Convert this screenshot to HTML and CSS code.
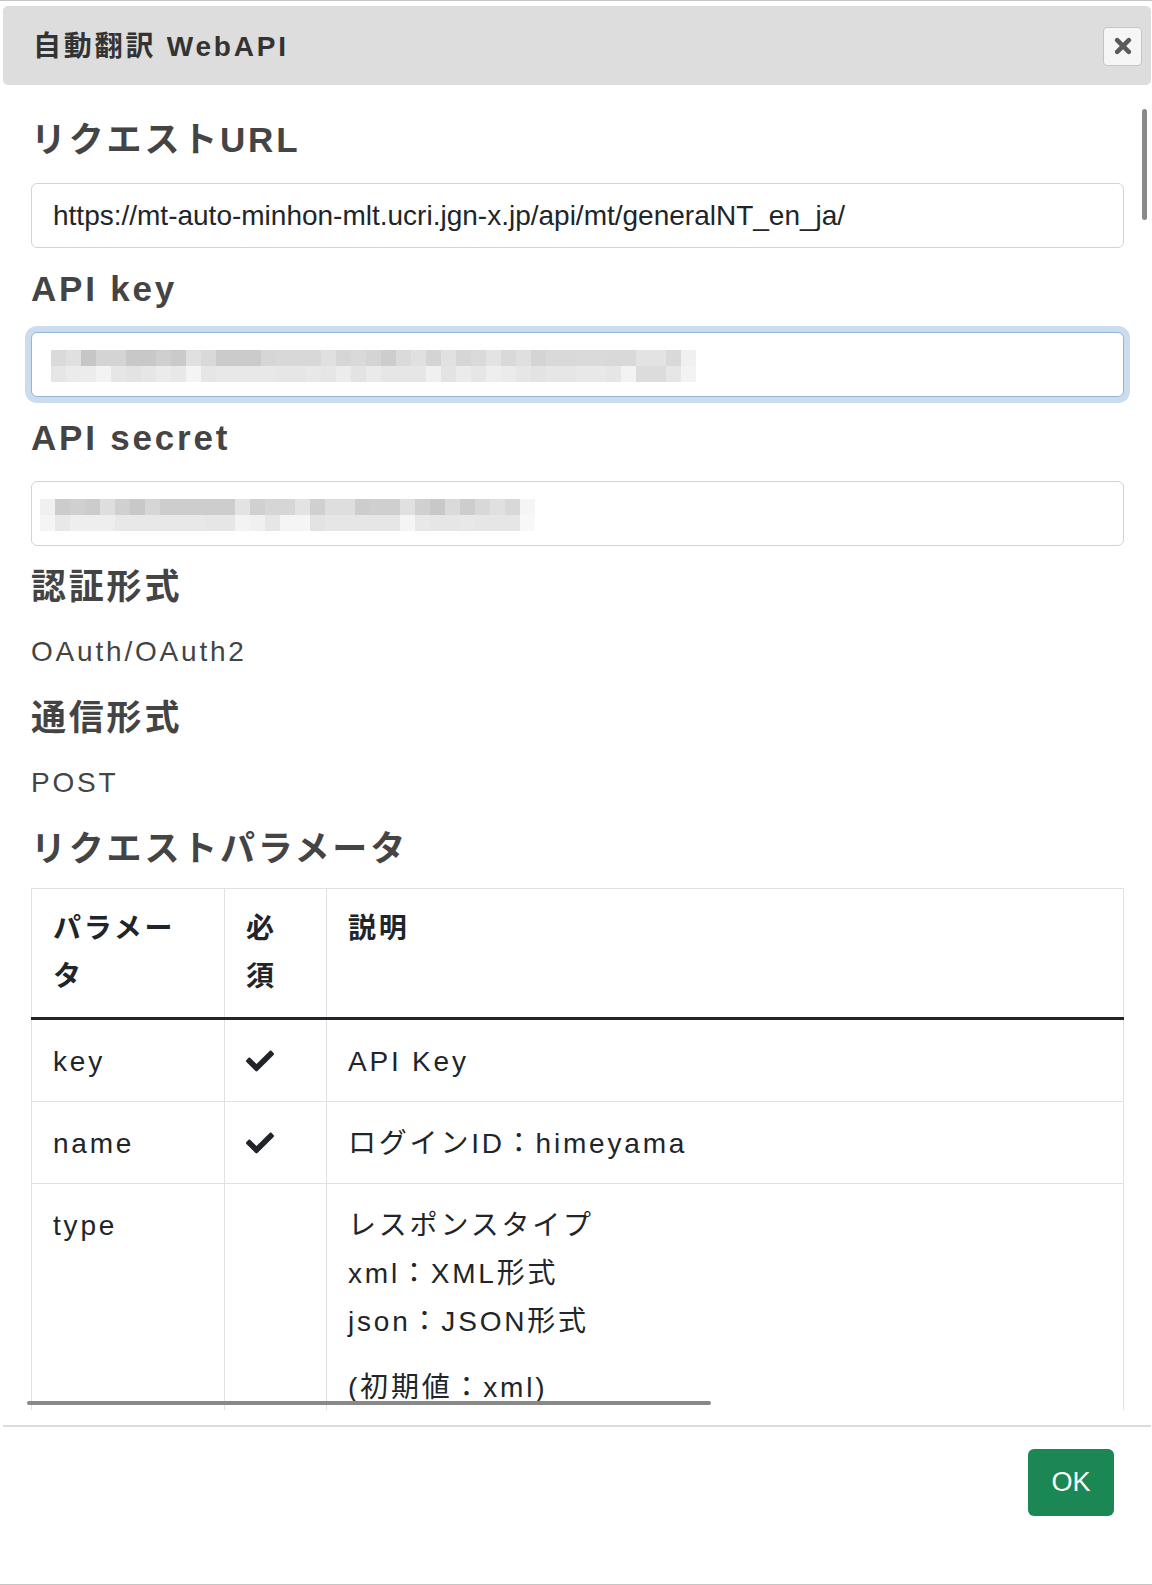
FILE: index.html
```html
<!DOCTYPE html>
<html lang="ja">
<head>
<meta charset="utf-8">
<title>自動翻訳 WebAPI</title>
<link rel="stylesheet" href="styles.css">
</head>
<body>
<div class="dialog">
  <div class="titlebar">
    <span class="title">自動翻訳 WebAPI</span>
    <button class="close" type="button" aria-label="close">
      <svg width="18" height="18" viewBox="0 0 18 18"><path d="M3.2 3.2L14.8 14.8M14.8 3.2L3.2 14.8" stroke="#5a5a5a" stroke-width="4.6" stroke-linecap="round"/></svg>
    </button>
  </div>
  <div class="content">
    <h3>リクエストURL</h3>
    <input class="field" type="text" value="https://mt-auto-minhon-mlt.ucri.jgn-x.jp/api/mt/generalNT_en_ja/">
    <h3>API key</h3>
    <input class="field field-focus mosaic-key" type="text">
    <h3>API secret</h3>
    <input class="field mosaic-secret" type="text">
    <h3>認証形式</h3>
    <p class="value">OAuth/OAuth2</p>
    <h3>通信形式</h3>
    <p class="value">POST</p>
    <h3>リクエストパラメータ</h3>
    <table class="params">
      <colgroup><col class="c1"><col class="c2"><col class="c3"></colgroup>
      <thead>
        <tr><th>パラメータ</th><th>必須</th><th>説明</th></tr>
      </thead>
      <tbody>
        <tr>
          <td>key</td>
          <td><svg class="check" width="28" height="28" viewBox="0 0 512 512"><path d="M173.898 439.404l-166.4-166.4c-9.997-9.997-9.997-26.206 0-36.204l36.203-36.204c9.997-9.998 26.207-9.998 36.204 0L192 312.69 432.095 72.596c9.997-9.997 26.207-9.997 36.204 0l36.203 36.204c9.997 9.997 9.997 26.206 0 36.204l-294.4 294.401c-9.998 9.997-26.207 9.997-36.204-.001z"/></svg></td>
          <td>API Key</td>
        </tr>
        <tr>
          <td>name</td>
          <td><svg class="check" width="28" height="28" viewBox="0 0 512 512"><path d="M173.898 439.404l-166.4-166.4c-9.997-9.997-9.997-26.206 0-36.204l36.203-36.204c9.997-9.998 26.207-9.998 36.204 0L192 312.69 432.095 72.596c9.997-9.997 26.207-9.997 36.204 0l36.203 36.204c9.997 9.997 9.997 26.206 0 36.204l-294.4 294.401c-9.998 9.997-26.207 9.997-36.204-.001z"/></svg></td>
          <td>ログインID：himeyama</td>
        </tr>
        <tr>
          <td>type</td>
          <td></td>
          <td>レスポンスタイプ<br>xml：XML形式<br>json：JSON形式<p class="note">(初期値：xml)</p></td>
        </tr>
      </tbody>
    </table>
    <div class="vscroll"></div>
    <div class="hscroll"></div>
  </div>
  <div class="buttonpane">
    <button class="ok" type="button">OK</button>
  </div>
</div>
</body>
</html>
```
FILE: styles.css
```css
html, body {
  margin: 0;
  padding: 0;
  background: #fff;
}

body {
  font-family: "Liberation Sans", "Noto Sans CJK JP", sans-serif;
  font-size: 28px;
  letter-spacing: 0.1em;
  color: #444;
}

.dialog {
  box-sizing: border-box;
  height: 1585px;
  border-top: 1px solid #c5c5c5;
  border-bottom: 1px solid #c5c5c5;
  padding: 5px 1px 0 3px;
  display: flex;
  flex-direction: column;
  overflow: hidden;
}

.titlebar {
  flex: none;
  height: 79px;
  box-sizing: border-box;
  background: #dddddd;
  border-radius: 5px;
  display: flex;
  align-items: center;
  justify-content: space-between;
  padding: 0 9px 0 30px;
}

.title {
  font-weight: bold;
  color: #333;
  font-size: 28px;
  margin-bottom: 4px;
}

.close {
  width: 39px;
  height: 39px;
  box-sizing: border-box;
  border: 1px solid #c5c5c5;
  border-radius: 4px;
  background: #f6f6f6;
  display: flex;
  align-items: center;
  justify-content: center;
  padding: 0;
  margin-top: 1px;
}

.content {
  flex: none;
  height: 1325px;
  box-sizing: border-box;
  position: relative;
  overflow: hidden;
  padding: 14px 27px 0 28px;
}

h3 {
  font-size: 35px;
  line-height: 40px;
  margin: 21px 0 23px;
  font-weight: bold;
  color: #444;
}

.field {
  display: block;
  box-sizing: border-box;
  width: 100%;
  height: 65px;
  margin: 0;
  border: 1px solid #ced4da;
  border-radius: 6px;
  padding: 0 21px;
  font-family: "Liberation Sans", sans-serif;
  font-size: 28px;
  letter-spacing: 0;
  color: #212529;
  background-color: #fff;
  background-repeat: no-repeat;
  outline: none;
}

.field-focus {
  border-color: #93b5da;
  box-shadow: 0 0 0 6px #cadcee;
}

.mosaic-key {
  background-size: 645px 16px, 645px 16px;
  background-position: 19px 17px, 19px 33px;
  background-image:
    linear-gradient(90deg, #dadada 0 15px, #e0e0e0 15px 30px, #c6c6c6 30px 45px, #d4d4d4 45px 75px, #c8c8c8 75px 105px, #cfcfcf 105px 120px, #cacaca 120px 135px, #e0e0e0 135px 150px, #d9d9d9 150px 165px, #cbcbcb 165px 210px, #d6d6d6 210px 225px, #d8d8d8 225px 270px, #e0e0e0 270px 285px, #d6d6d6 285px 300px, #d9d9d9 300px 315px, #d4d4d4 315px 330px, #cdcdcd 330px 345px, #dadada 345px 360px, #e0e0e0 360px 375px, #d4d4d4 375px 390px, #e1e1e1 390px 405px, #d6d6d6 405px 420px, #dadada 420px 435px, #e3e3e3 435px 450px, #d9d9d9 450px 465px, #dfdfdf 465px 480px, #d4d4d4 480px 495px, #d9d9d9 495px 525px, #dadada 525px 555px, #d9d9d9 555px 585px, #e3e3e3 585px 615px, #d9d9d9 615px 630px, #f0f0f0 630px 645px),
    linear-gradient(90deg, #e6e6e6 0 15px, #ebebeb 15px 30px, #ececec 30px 45px, #f3f3f3 45px 60px, #e6e6e6 60px 75px, #e3e3e3 75px 90px, #e6e6e6 90px 105px, #ebebeb 105px 120px, #e8e8e8 120px 135px, #f4f4f4 135px 150px, #e6e6e6 150px 165px, #e8e8e8 165px 225px, #e6e6e6 225px 255px, #e8e8e8 255px 270px, #e6e6e6 270px 285px, #ececec 285px 300px, #e3e3e3 300px 315px, #eaeaea 315px 330px, #e6e6e6 330px 375px, #f0f0f0 375px 390px, #e3e3e3 390px 405px, #ebebeb 405px 420px, #e6e6e6 420px 435px, #eeeeee 435px 450px, #ebebeb 450px 465px, #e6e6e6 465px 480px, #e3e3e3 480px 495px, #e6e6e6 495px 525px, #e8e8e8 525px 555px, #e6e6e6 555px 570px, #f3f3f3 570px 585px, #dcdcdc 585px 615px, #e6e6e6 615px 630px, #f3f3f3 630px 645px);
}

.mosaic-secret {
  background-size: 495px 16px, 495px 16px;
  background-position: 8px 17px, 8px 33px;
  background-image:
    linear-gradient(90deg, #f0f0f0 0 15px, #cccccc 15px 30px, #d0d0d0 30px 45px, #cccccc 45px 60px, #dedede 60px 75px, #d0d0d0 75px 90px, #c8c8c8 90px 105px, #d6d6d6 105px 120px, #cdcdcd 120px 195px, #e3e3e3 195px 210px, #d0d0d0 210px 225px, #d6d6d6 225px 255px, #e3e3e3 255px 270px, #d0d0d0 270px 285px, #dedede 285px 315px, #cdcdcd 315px 330px, #cfcfcf 330px 360px, #e0e0e0 360px 375px, #d0d0d0 375px 390px, #c8c8c8 390px 405px, #dadada 405px 420px, #cdcdcd 420px 435px, #d8d8d8 435px 450px, #e0e0e0 450px 465px, #d8d8d8 465px 480px, #f5f5f5 480px 495px),
    linear-gradient(90deg, #f5f5f5 0 15px, #e8e8e8 15px 30px, #eeeeee 30px 75px, #e8e8e8 75px 165px, #e6e6e6 165px 195px, #f3f3f3 195px 210px, #f0f0f0 210px 225px, #e6e6e6 225px 240px, #f5f5f5 240px 270px, #e3e3e3 270px 285px, #e6e6e6 285px 360px, #f5f5f5 360px 375px, #e8e8e8 375px 390px, #e6e6e6 390px 420px, #e8e8e8 420px 435px, #e6e6e6 435px 480px, #f8f8f8 480px 495px);
}

.value {
  margin: 0;
  padding-bottom: 3px;
  line-height: 44px;
}

.params {
  width: 100%;
  margin-top: -4px;
  border-collapse: collapse;
  table-layout: fixed;
  color: #212529;
  border: 1px solid #dee2e6;
}

.params col.c1 {
  width: 193px;
}

.params col.c2 {
  width: 102px;
}

.params th,
.params td {
  padding: 18px 20px 15px 21px;
  line-height: 48px;
  text-align: left;
  vertical-align: top;
  border: 1px solid #dee2e6;
  font-weight: normal;
}

.params thead th {
  padding: 16px 20px 16px 21px;
  font-weight: bold;
  border-bottom: 3px solid #212529;
}

.check {
  display: block;
  margin-top: 9px;
  fill: #212529;
}

.note {
  margin: 18px 0 0;
  line-height: 48px;
}

.vscroll {
  position: absolute;
  right: 4px;
  top: 24px;
  width: 5px;
  height: 111px;
  background: #8a8a8a;
  border-radius: 3px;
}

.hscroll {
  position: absolute;
  left: 24px;
  bottom: 5px;
  width: 684px;
  height: 4px;
  background: #888;
  border-radius: 2px;
}

.buttonpane {
  flex: 1;
  margin-top: 15px;
  border-top: 2px solid #dcdcdc;
  padding: 22px 37px 0 0;
  display: flex;
  justify-content: flex-end;
  align-items: flex-start;
}

.ok {
  width: 86px;
  height: 67px;
  background: #1a8755;
  color: #fff;
  border: none;
  border-radius: 6px;
  font-family: "Liberation Sans", sans-serif;
  font-size: 27px;
  letter-spacing: 0;
  padding: 0;
}
```
